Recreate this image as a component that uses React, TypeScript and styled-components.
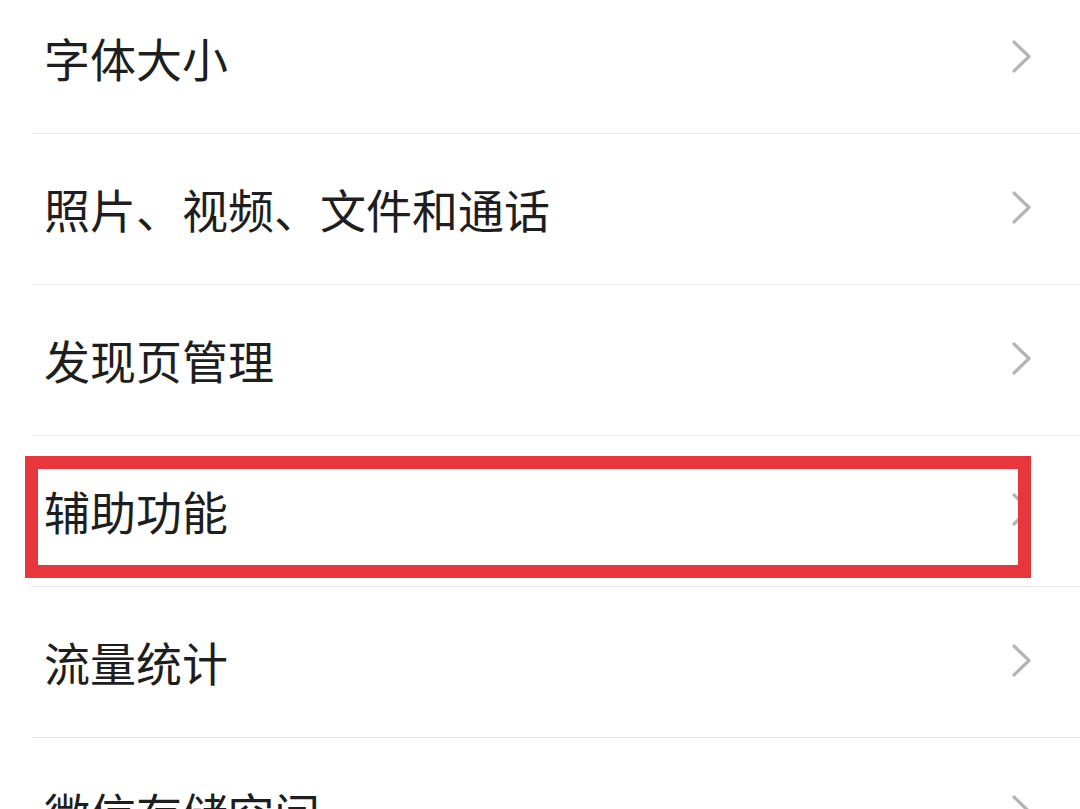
import React from "react";
import styled, { createGlobalStyle } from "styled-components";

const Global = createGlobalStyle`
  html, body { margin: 0; padding: 0; background: #ffffff; overflow: hidden; }
  body { font-family: "Noto Sans CJK SC", "Noto Sans", sans-serif; }
`;

const List = styled.div`
  display: flex;
  flex-direction: column;
  margin-top: -17px;
  width: 1080px;
`;

const Row = styled.div`
  position: relative;
  height: 150px;
  display: flex;
  align-items: center;
  justify-content: space-between;
  padding: 0 48px 0 44px;
  box-sizing: border-box;
  margin-bottom: 1px;
  &::after {
    content: "";
    position: absolute;
    left: 32px;
    right: 0;
    bottom: -1px;
    height: 1px;
    background: #e6e6e6;
  }
`;

const Label = styled.span`
  font-size: 46px;
  color: #1e1e1e;
  line-height: 1;
  white-space: nowrap;
  margin-top: -2px;
`;

const Chevron = styled.svg`
  width: 21px;
  height: 35px;
  flex: none;
  margin-top: -3px;
`;

const Highlight = styled.div`
  position: absolute;
  left: 25px;
  top: 20px;
  width: 1006px;
  height: 122px;
  box-sizing: border-box;
  border: 13px solid #e8363d;
  pointer-events: none;
`;

const items = [
  "字体大小",
  "照片、视频、文件和通话",
  "发现页管理",
  "辅助功能",
  "流量统计",
  "微信存储空间",
];

export default function App() {
  return (
    <>
      <Global />
      <List>
        {items.map((t, i) => (
          <Row key={t}>
            <Label>{t}</Label>
            <Chevron viewBox="0 0 21 35">
              <polyline
                points="3,3 18,17.5 3,32"
                fill="none"
                stroke="#b4b4b4"
                strokeWidth="3.2"
                strokeLinecap="round"
                strokeLinejoin="round"
              />
            </Chevron>
            {i === 3 && <Highlight />}
          </Row>
        ))}
      </List>
    </>
  );
}
